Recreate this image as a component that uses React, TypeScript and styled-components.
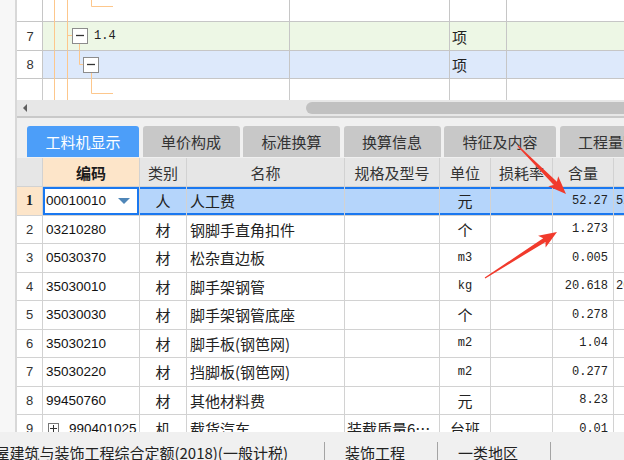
import React from "react";
import styled, { createGlobalStyle, css } from "styled-components";

const CJK = `"Noto Sans CJK SC", "Liberation Sans", sans-serif`;
const LATIN = `"Liberation Sans", "Noto Sans CJK SC", sans-serif`;
const MONO = `"Liberation Mono", "Noto Sans CJK SC", monospace`;

const GlobalStyle = createGlobalStyle`
  html, body { margin: 0; padding: 0; background: #f0f0f0; overflow: hidden; }
  body { font-family: ${CJK}; }
  * { box-sizing: border-box; }
`;

const Page = styled.div`
  position: relative;
  width: 624px;
  height: 460px;
  display: flex;
  flex-direction: column;
  overflow: hidden;
  background: #f0f0f0;
`;

const Main = styled.div`
  display: flex;
  height: 432px;
  flex: none;
`;

const LeftStrip = styled.div`
  width: 17px;
  flex: none;
  background: #f7f7f7;
  border-right: 2px solid #d8d8d8;
`;

const Content = styled.div`
  flex: 1;
  min-width: 0;
  display: flex;
  flex-direction: column;
  overflow: hidden;
`;

/* ---------- top tree grid ---------- */
const TopGrid = styled.div`
  height: 100px;
  flex: none;
  background: #fff;
  overflow: hidden;
`;

const TopRow = styled.div<{ $h: number }>`
  display: grid;
  grid-template-columns: 26px 247px 160px 57px 200px;
  height: ${(p) => p.$h}px;
`;

const TopCell = styled.div<{ $bg?: string; $last?: boolean; $center?: boolean; $tree?: boolean }>`
  display: flex;
  align-items: center;
  justify-content: ${(p) => (p.$center ? "center" : "flex-start")};
  padding-left: ${(p) => (p.$center || p.$tree ? 0 : 2)}px;
  background: ${(p) => p.$bg ?? "#fff"};
  box-shadow: ${(p) => (p.$last ? "inset -1px 0 0 #cacaca" : "inset -1px -1px 0 #c6c6c6")};
  font: 15px ${CJK};
  color: #222;
  overflow: hidden;
  white-space: nowrap;
`;

const RowNum = styled.span`
  font: 13px ${LATIN};
  color: #333;
`;

const TreeText = styled.span`
  margin-left: 6px;
  font: 12px ${MONO};
  color: #222;
`;

const ORANGE = "#fdc78c";

const TreeGuide: React.FC<{ w: number; h: number; kind: "top" | "open1" | "open2" | "end" }> = ({ w, h, kind }) => (
  <svg width={w} height={h} style={{ flex: "none", display: "block" }}>
    <g stroke={ORANGE} strokeWidth={1} fill="none">
      <path d={`M11.5 0V${h}M24.5 0V${h}`} />
      {kind === "top" && <path d="M48.5 0V6.5H70" />}
      {kind === "open1" && <path d={`M24.5 13.5H29.5M36.5 21.5V${h}`} />}
      {kind === "open2" && <path d={`M36.5 0V13.5H40.5M48.5 21.5V${h}`} />}
      {kind === "end" && <path d="M48.5 0V14.5H70" />}
    </g>
    {kind === "open1" && (
      <g>
        <rect x={29.5} y={6.5} width={15} height={15} fill="#fff" stroke="#8c8c8c" />
        <path d="M33 13.5H41" stroke="#333" strokeWidth={1.3} />
      </g>
    )}
    {kind === "open2" && (
      <g>
        <rect x={40.5} y={6.5} width={15} height={15} fill="#fff" stroke="#8c8c8c" />
        <path d="M44 13.5H52" stroke="#333" strokeWidth={1.3} />
      </g>
    )}
  </svg>
);

/* ---------- scroll bar ---------- */
const HScroll = styled.div`
  height: 16px;
  flex: none;
  display: flex;
  align-items: center;
  padding-left: 6px;
  background: #e7e7e7;
`;

const ScrollArrow = styled.div`
  flex: none;
  width: 0;
  height: 0;
  border-top: 4px solid transparent;
  border-bottom: 4px solid transparent;
  border-right: 4px solid #5f5f5f;
`;

const ScrollThumb = styled.div`
  flex: 1;
  margin-left: 279px;
  height: 12px;
  background: #c1c1c1;
  border-radius: 6px 0 0 6px;
`;

const Splitter = styled.div`
  height: 2px;
  flex: none;
  background: #c9c9c9;
`;

/* ---------- tabs ---------- */
const TabBar = styled.div`
  height: 40px;
  flex: none;
  display: flex;
  gap: 3.5px;
  padding: 8px 0 0 10px;
  background: #f0f0f0;
  overflow: hidden;
`;

const Tab = styled.div<{ $active?: boolean }>`
  flex: none;
  height: 31px;
  padding: 0 18.5px;
  display: flex;
  align-items: center;
  border-radius: 3px 3px 0 0;
  font: 15px/1 ${CJK};
  white-space: nowrap;
  background: ${(p) => (p.$active ? "#4c9ef9" : "#c8c8c8")};
  color: ${(p) => (p.$active ? "#fff" : "#333")};
`;

/* ---------- material table ---------- */
const COLS = "26px 97px 47px 158px 95px 51px 62px 61px 100px";

const Table = styled.div`
  flex: 1;
  background: #fff;
  overflow: hidden;
`;

const Row = styled.div<{ $h: number }>`
  display: grid;
  grid-template-columns: ${COLS};
  height: ${(p) => p.$h}px;
`;

const HeadCell = styled.div<{ $key?: boolean }>`
  display: flex;
  align-items: center;
  justify-content: center;
  border-right: 1px solid #d2d2d2;
  border-bottom: 1px solid #d2d2d2;
  background: ${(p) => (p.$key ? "#fde5c9" : "#e6e6e6")};
  font: ${(p) => (p.$key ? 700 : 400)} 15px ${CJK};
  color: ${(p) => (p.$key ? "#1a1a1a" : "#333")};
  white-space: nowrap;
  overflow: hidden;
`;

type Align = "left" | "center" | "right";

const Cell = styled.div<{ $align?: Align; $mono?: boolean; $sel?: boolean; $edit?: boolean; $num?: boolean; $pl?: number }>`
  display: flex;
  align-items: center;
  justify-content: ${(p) => (p.$align === "center" ? "center" : p.$align === "right" ? "flex-end" : "flex-start")};
  padding: 0 ${(p) => (p.$align === "right" ? 5 : 1)}px 0 ${(p) => p.$pl ?? (p.$align === "left" ? 3 : 1)}px;
  border-right: 1px solid #d2d2d2;
  border-bottom: 1px solid #d2d2d2;
  background: #fff;
  color: #222;
  white-space: nowrap;
  overflow: hidden;
  font: ${(p) => (p.$mono ? `12px ${MONO}` : `15px ${CJK}`)};
  ${(p) =>
    p.$num &&
    css`
      font: 13px ${LATIN};
      color: #333;
    `}
  ${(p) =>
    p.$sel &&
    css`
      background: #b5d5fb;
      box-shadow: inset 0 2px 0 #1a78f0, inset 0 -2px 0 #1a78f0;
    `}
  ${(p) =>
    p.$edit &&
    css`
      background: #fff;
      box-shadow: inset 0 0 0 2px #1a78f0;
    `}
`;

const SelNum = styled(Cell)`
  background: #fde5c9;
  font: 700 14px "Liberation Serif", serif;
  color: #222;
`;

const CodeText = styled.span`
  flex: 1;
  font: 13.5px ${LATIN};
  color: #111;
`;

const DropArrow = styled.span`
  flex: none;
  width: 0;
  height: 0;
  margin-right: 8px;
  border-left: 6px solid transparent;
  border-right: 6px solid transparent;
  border-top: 6px solid #4f86b8;
`;

const PlusBox = styled.span`
  flex: none;
  width: 11px;
  height: 11px;
  margin: 0 10px 0 1px;
  border: 1px solid #777;
  display: flex;
  align-items: center;
  justify-content: center;
  background: #fff;
`;

/* ---------- status bar ---------- */
const StatusBar = styled.div`
  height: 28px;
  flex: none;
  display: flex;
  align-items: flex-start;
  padding-top: 10px;
  background: #f0f0f0;
  font: 15px/22px ${CJK};
  color: #222;
  overflow: hidden;
`;

const StatusLead = styled.div`
  flex: none;
  width: 324px;
  display: flex;
  justify-content: flex-end;
  padding-right: 36px;
  overflow: hidden;
  white-space: nowrap;
`;

const NoShrink = styled.span`
  flex: none;
`;

const StatusItem = styled.div`
  flex: none;
  padding: 0 32px 0 20px;
  white-space: nowrap;
`;

const StatusSep = styled.div`
  flex: none;
  width: 1px;
  height: 18px;
  background: #a4a4a4;
`;

/* ---------- annotation arrows ---------- */
const Overlay = styled.svg`
  position: absolute;
  left: 0;
  top: 0;
  pointer-events: none;
`;

function arrowPoints(sx: number, sy: number, tx: number, ty: number) {
  const headLen = 18;
  const headHalf = 7;
  const neckHalf = 2.2;
  const tailHalf = 0.5;
  const dx = tx - sx;
  const dy = ty - sy;
  const L = Math.hypot(dx, dy);
  const ux = dx / L;
  const uy = dy / L;
  const nx = -uy;
  const ny = ux;
  const bx = tx - ux * headLen;
  const by = ty - uy * headLen;
  const cx = tx - ux * (headLen - 3);
  const cy = ty - uy * (headLen - 3);
  const pts = [
    [sx + nx * tailHalf, sy + ny * tailHalf],
    [cx + nx * neckHalf, cy + ny * neckHalf],
    [bx + nx * headHalf, by + ny * headHalf],
    [tx, ty],
    [bx - nx * headHalf, by - ny * headHalf],
    [cx - nx * neckHalf, cy - ny * neckHalf],
    [sx - nx * tailHalf, sy - ny * tailHalf],
  ];
  return pts.map((p) => `${p[0].toFixed(1)},${p[1].toFixed(1)}`).join(" ");
}

type Item = {
  n: string;
  code: string;
  type: string;
  name: string;
  spec?: string;
  unit: string;
  monoUnit?: boolean;
  qty: string;
  extra?: string;
  sel?: boolean;
  expand?: boolean;
};

const items: Item[] = [
  { n: "1", code: "00010010", type: "人", name: "人工费", unit: "元", qty: "52.27", extra: "52.27", sel: true },
  { n: "2", code: "03210280", type: "材", name: "钢脚手直角扣件", unit: "个", qty: "1.273" },
  { n: "3", code: "05030370", type: "材", name: "松杂直边板", unit: "m3", monoUnit: true, qty: "0.005" },
  { n: "4", code: "35030010", type: "材", name: "脚手架钢管", unit: "kg", monoUnit: true, qty: "20.618", extra: "20.618" },
  { n: "5", code: "35030030", type: "材", name: "脚手架钢管底座", unit: "个", qty: "0.278" },
  { n: "6", code: "35030210", type: "材", name: "脚手板(钢笆网)", unit: "m2", monoUnit: true, qty: "1.04" },
  { n: "7", code: "35030220", type: "材", name: "挡脚板(钢笆网)", unit: "m2", monoUnit: true, qty: "0.277" },
  { n: "8", code: "99450760", type: "材", name: "其他材料费", unit: "元", qty: "8.23" },
  { n: "9", code: "990401025", type: "机", name: "载货汽车", spec: "装载质量6…", unit: "台班", qty: "0.01", expand: true },
];

const tabs = ["工料机显示", "单价构成", "标准换算", "换算信息", "特征及内容", "工程量明细"];
const heads = ["", "编码", "类别", "名称", "规格及型号", "单位", "损耗率", "含量", ""];

const ItemRow: React.FC<{ it: Item }> = ({ it }) => {
  const s = !!it.sel;
  return (
    <Row $h={28.5}>
      {s ? (
        <SelNum $align="center">{it.n}</SelNum>
      ) : (
        <Cell $num $align="center">
          {it.n}
        </Cell>
      )}
      <Cell $align="left" $edit={s} $pl={it.expand ? 4 : 3}>
        {it.expand && (
          <PlusBox>
            <svg width={7} height={7}>
              <path d="M0 3.5H7M3.5 0V7" stroke="#333" strokeWidth={1} />
            </svg>
          </PlusBox>
        )}
        <CodeText>{it.code}</CodeText>
        {s && <DropArrow />}
      </Cell>
      <Cell $align="center" $sel={s}>
        {it.type}
      </Cell>
      <Cell $align="left" $sel={s}>
        {it.name}
      </Cell>
      <Cell $align="left" $pl={2} $sel={s}>
        {it.spec ?? ""}
      </Cell>
      <Cell $align="center" $sel={s} $mono={it.monoUnit}>
        {it.unit}
      </Cell>
      <Cell $sel={s} />
      <Cell $align="right" $mono $sel={s}>
        {it.qty}
      </Cell>
      <Cell $mono $pl={2} $sel={s}>
        {it.extra ?? ""}
      </Cell>
    </Row>
  );
};

export default function App() {
  return (
    <Page>
      <GlobalStyle />
      <Main>
        <LeftStrip />
        <Content>
          <TopGrid>
            <TopRow $h={22}>
              <TopCell $center />
              <TopCell $tree>
                <TreeGuide w={72} h={22} kind="top" />
              </TopCell>
              <TopCell />
              <TopCell />
              <TopCell />
            </TopRow>
            <TopRow $h={28.5}>
              <TopCell $center>
                <RowNum>7</RowNum>
              </TopCell>
              <TopCell $tree $bg="#edf7e5">
                <TreeGuide w={45} h={28.5} kind="open1" />
                <TreeText>1.4</TreeText>
              </TopCell>
              <TopCell $bg="#edf7e5" />
              <TopCell $bg="#edf7e5">项</TopCell>
              <TopCell $bg="#edf7e5" />
            </TopRow>
            <TopRow $h={28.5}>
              <TopCell $center>
                <RowNum>8</RowNum>
              </TopCell>
              <TopCell $tree $bg="#dde9fb">
                <TreeGuide w={57} h={28.5} kind="open2" />
              </TopCell>
              <TopCell $bg="#dde9fb" />
              <TopCell $bg="#dde9fb">项</TopCell>
              <TopCell $bg="#dde9fb" />
            </TopRow>
            <TopRow $h={21}>
              <TopCell $center $last />
              <TopCell $tree $last>
                <TreeGuide w={72} h={21} kind="end" />
              </TopCell>
              <TopCell $last />
              <TopCell $last />
              <TopCell $last />
            </TopRow>
          </TopGrid>
          <HScroll>
            <ScrollArrow />
            <ScrollThumb />
          </HScroll>
          <Splitter />
          <TabBar>
            {tabs.map((t, i) => (
              <Tab key={t} $active={i === 0}>
                {t}
              </Tab>
            ))}
          </TabBar>
          <Table>
            <Row $h={29}>
              {heads.map((h, i) => (
                <HeadCell key={i} $key={i === 1}>
                  {h}
                </HeadCell>
              ))}
            </Row>
            {items.map((it) => (
              <ItemRow key={it.n} it={it} />
            ))}
          </Table>
        </Content>
      </Main>
      <StatusBar>
        <StatusLead>
          <NoShrink>房屋建筑与装饰工程综合定额(2018)(一般计税)</NoShrink>
        </StatusLead>
        <StatusSep />
        <StatusItem>装饰工程</StatusItem>
        <StatusSep />
        <StatusItem>一类地区</StatusItem>
        <StatusSep />
      </StatusBar>
      <Overlay width={624} height={460}>
        <polygon points={arrowPoints(518, 146, 566, 194)} fill="#f13a2c" />
        <polygon points={arrowPoints(485, 278, 557, 232)} fill="#f13a2c" />
      </Overlay>
    </Page>
  );
}
